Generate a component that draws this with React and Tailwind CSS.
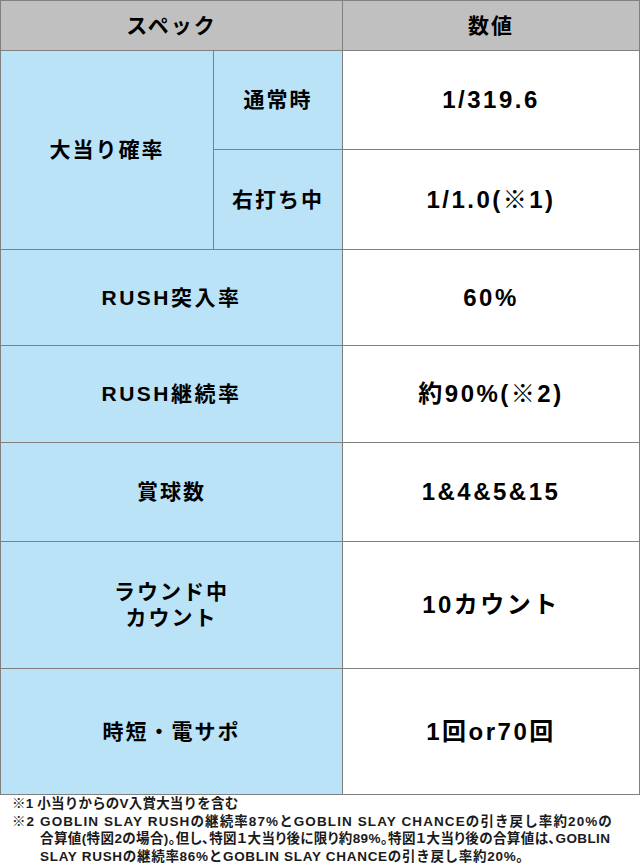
import React from "react";

const font = { fontFamily: '"Liberation Sans", "Noto Sans CJK JP", sans-serif' };

const Label = ({ children, className = "" }) => (
  <div
    className={`bg-[#bbe3f8] flex items-center justify-center text-center text-[21px] font-bold tracking-[2px] leading-[26px] text-black ${className}`}
  >
    {children}
  </div>
);

const Value = ({ children }) => (
  <div className="bg-white flex items-center justify-center text-[24px] font-bold tracking-[2.5px] text-black">
    {children}
  </div>
);

const rows = [
  [<span className="tracking-[2.5px]">RUSH突入率</span>, "60%"],
  [<span className="tracking-[2.5px]">RUSH継続率</span>, "約90%(※2)"],
  ["賞球数", "1&4&5&15"],
  [
    <>
      ラウンド中
      <br />
      カウント
    </>,
    "10カウント",
  ],
  ["時短・電サポ", "1回or70回"],
];

export default function App() {
  return (
    <div className="w-[640px] h-[868px] bg-white overflow-hidden" style={font}>
      <div className="grid grid-cols-[212px_128px_296px] grid-rows-[49px_98px_99px_95px_96px_98px_126px_125px] gap-px bg-[#808080] p-px">
        <div className="col-span-2 bg-[#c0c0c0] flex items-center justify-center text-[21px] font-bold tracking-[2px]">
          スペック
        </div>
        <div className="bg-[#c0c0c0] flex items-center justify-center text-[21px] font-bold tracking-[2px]">
          数値
        </div>

        <Label className="row-span-2">大当り確率</Label>
        <Label>通常時</Label>
        <Value>1/319.6</Value>
        <Label>右打ち中</Label>
        <Value>1/1.0(※1)</Value>

        {rows.map(([label, value], i) => (
          <React.Fragment key={i}>
            <Label className="col-span-2">{label}</Label>
            <Value>{value}</Value>
          </React.Fragment>
        ))}
      </div>

      <div className="pl-[12px] text-[13.5px] font-bold tracking-[0.7px] leading-[17.5px] text-[#1a1a1a] whitespace-nowrap">
        <div className="tracking-[0.2px]">※1 小当りからのV入賞大当りを含む</div>
        <div className="tracking-[1.1px]">
          ※2 GOBLIN SLAY RUSHの継続率87%とGOBLIN SLAY CHANCEの引き戻し率約20%の
        </div>
        <div className="pl-[28px] tracking-[0.4px] [font-feature-settings:'palt']">
          合算値(特図2の場合)。但し、特図１大当り後に限り約89%。特図１大当り後の合算値は、GOBLIN
        </div>
        <div className="pl-[28px]">
          SLAY RUSHの継続率86%とGOBLIN SLAY CHANCEの引き戻し率約20%。
        </div>
      </div>
    </div>
  );
}
